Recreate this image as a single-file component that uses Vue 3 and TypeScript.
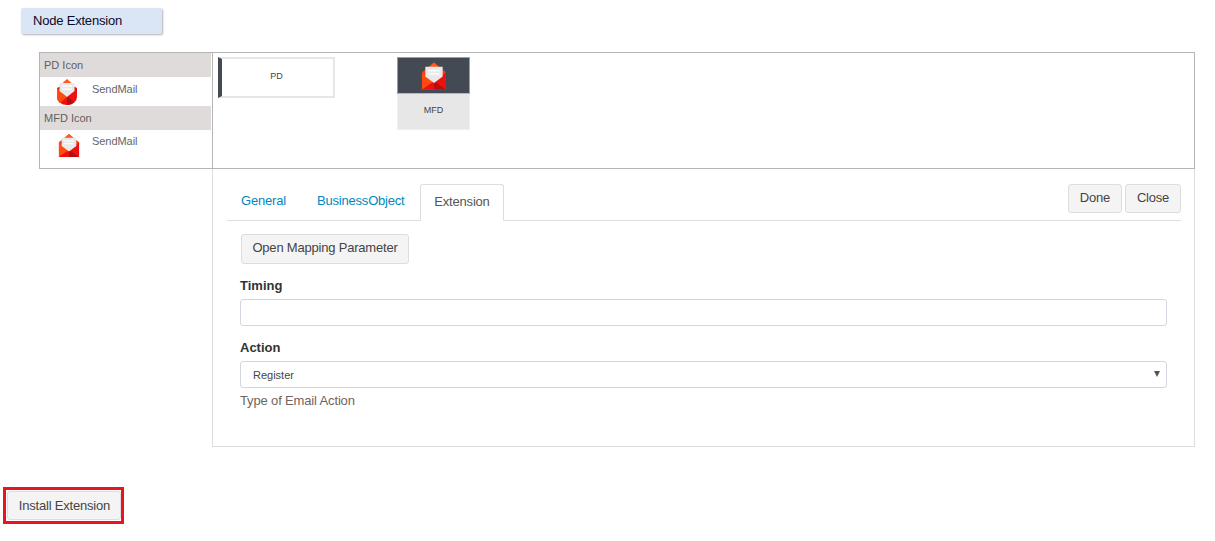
<script setup lang="ts">
const envelopeParts = [
  { d: 'M12 0 L23 9 V25 H1 V9 Z', fill: '#f2410f' },
  { d: 'M12 0 L16.5 4 H7.5 Z', fill: '#ff5a1f' },
  { d: 'M1 9 L12 18 L1 25 Z', fill: '#ff4a10' },
  { d: 'M23 9 L12 18 L23 25 Z', fill: '#ee0f0f' },
  { d: 'M1 25 L12 17 L12 25 Z', fill: '#ee1010' },
  { d: 'M23 25 L12 17 L12 25 Z', fill: '#b80d0d' },
  { d: 'M4 4 H20 V13 L12 19 L4 13 Z', fill: '#e9e9e9' },
  { d: 'M7 7 H17 V8.2 H7 Z M7 10 H17 V11.2 H7 Z', fill: '#ffffff' },
]
const roundParts = [
  { d: 'M11 0 L15.5 4 H6.5 Z', fill: '#ff5a1f' },
  { d: 'M1 9 L11 4 L21 9 V18 A10 8 0 0 1 1 18 Z', fill: '#ee1010' },
  { d: 'M1 9 L11 18 L4 24 A10 8 0 0 1 1 18 Z', fill: '#ff4a10' },
  { d: 'M11 17 L18 23.5 A10 6 0 0 1 11 26 Z', fill: '#b80d0d' },
  { d: 'M3.5 4 H18.5 V12 L11 18 L3.5 12 Z', fill: '#e9e9e9' },
  { d: 'M6 6.5 H16 V7.7 H6 Z M6 9.5 H16 V10.7 H6 Z', fill: '#ffffff' },
]
</script>

<template>
  <div class="page">
    <div class="chip">Node Extension</div>

    <div class="designer">
      <aside class="palette">
        <div class="pal-head">PD Icon</div>
        <div class="pal-row pal-row-pd">
          <svg class="pal-icon round" width="22" height="26" viewBox="0 0 22 26">
            <path v-for="p in roundParts" :key="p.d" :d="p.d" :fill="p.fill" />
          </svg>
          <span class="pal-name">SendMail</span>
        </div>
        <div class="pal-head">MFD Icon</div>
        <div class="pal-row pal-row-mfd">
          <svg class="pal-icon square" width="22" height="25" viewBox="0 0 24 25">
            <path v-for="p in envelopeParts" :key="p.d" :d="p.d" :fill="p.fill" />
          </svg>
          <span class="pal-name">SendMail</span>
        </div>
      </aside>

      <div class="canvas">
        <div class="node-pd">PD</div>
        <div class="node-mfd">
          <div class="node-mfd-top">
            <svg width="26" height="28" viewBox="0 0 24 25">
              <path v-for="p in envelopeParts" :key="p.d" :d="p.d" :fill="p.fill" />
            </svg>
          </div>
          <div class="node-mfd-label">MFD</div>
        </div>
      </div>
    </div>

    <section class="props">
      <div class="tabbar">
        <div class="tabs">
          <a class="tab tab-general">General</a>
          <a class="tab tab-bo">BusinessObject</a>
          <a class="tab tab-active">Extension</a>
        </div>
        <div class="tab-actions">
          <button class="btn btn-done" type="button">Done</button>
          <button class="btn btn-close" type="button">Close</button>
        </div>
      </div>

      <div class="form">
        <button class="btn btn-map" type="button">Open Mapping Parameter</button>
        <label class="label label-timing">Timing</label>
        <input class="control" type="text" />
        <label class="label label-action">Action</label>
        <div class="select-wrap">
          <span>Register</span>
          <i class="caret"></i>
        </div>
        <p class="help">Type of Email Action</p>
      </div>
    </section>

    <div class="install-mark">
      <button class="btn btn-install" type="button">Install Extension</button>
    </div>
  </div>
</template>

<style>
html, body { margin: 0; background: #fff; }
</style>

<style scoped>
.page {
  width: 1215px;
  height: 541px;
  overflow: hidden;
  box-sizing: border-box;
  padding-top: 8px;
  font-family: "Liberation Sans", Arial, sans-serif;
  color: #333;
}
.chip {
  box-sizing: border-box;
  width: 141px;
  height: 26px;
  margin-left: 21px;
  padding-left: 12px;
  line-height: 25px;
  font-size: 13px;
  letter-spacing: -0.2px;
  color: #0a0a2a;
  background: #dae5f5;
  border-radius: 2px;
  box-shadow: 1px 1px 2px rgba(0, 0, 0, 0.3);
}
.designer {
  display: flex;
  margin: 18px 20px 0 39px;
  height: 117px;
  box-sizing: border-box;
  border: 1px solid #b5b5b5;
}
.palette {
  width: 173px;
  flex: none;
  box-sizing: border-box;
  padding-right: 1px;
  border-right: 1px solid #b5b5b5;
  font-size: 11px;
  color: #666;
}
.pal-head {
  height: 24px;
  line-height: 25px;
  padding-left: 4px;
  background: #e0dbdb;
  color: #5f5f5f;
}
.pal-row { display: flex; position: relative; }
.pal-row-pd { height: 29px; }
.pal-row-mfd { height: 36px; }
.pal-icon { flex: none; margin-top: 2px; }
.round { margin-left: 16px; }
.square { margin-left: 18px; margin-top: 3px; }
.pal-name { margin-top: 6px; letter-spacing: -0.05px; }
.square + .pal-name { margin-top: 5px; }
.round + .pal-name { margin-left: 14px; }
.square + .pal-name { margin-left: 12px; }
.canvas { position: relative; flex: 1; }
.node-pd {
  position: absolute;
  left: 5px;
  top: 4px;
  box-sizing: border-box;
  width: 117px;
  height: 41px;
  padding-right: 2px;
  border: 2px solid #e6e6e6;
  border-left: 4px solid #434a54;
  text-align: center;
  line-height: 35px;
  font-size: 9px;
  color: #444;
}
.node-mfd {
  position: absolute;
  left: 184px;
  top: 4px;
  width: 73px;
  height: 73px;
  font-size: 9px;
  color: #444;
}
.node-mfd-top {
  box-sizing: border-box;
  height: 37px;
  background: #434a54;
  border: 1px solid #9a9ea6;
  border-bottom-color: #b5b8bd;
  display: flex;
  justify-content: center;
  align-items: center;
}
.node-mfd-label {
  box-sizing: border-box;
  height: 36px;
  line-height: 32px;
  text-align: center;
  background: #e7e7e7;
  border: 1px solid #efefef;
  border-top: 0;
}
.props {
  box-sizing: border-box;
  margin: 0 20px 0 212px;
  width: 983px;
  height: 278px;
  border: 1px solid #ddd;
  border-top: 0;
  padding: 15px 13px 0 14px;
}
.tabbar {
  display: flex;
  justify-content: space-between;
  align-items: flex-start;
  height: 37px;
  box-sizing: border-box;
  border-bottom: 1px solid #ddd;
}
.tabs { display: flex; font-size: 13px; letter-spacing: -0.2px; }
.tab {
  box-sizing: border-box;
  height: 37px;
  line-height: 33px;
  color: #0088c0;
}
.tab-general { margin-left: 14px; width: 76px; }
.tab-bo { width: 103px; }
.tab-active {
  width: 84px;
  text-align: center;
  color: #555;
  background: #fff;
  border: 1px solid #ddd;
  border-bottom-color: #fff;
  border-radius: 3px 3px 0 0;
}
.tab-actions { display: flex; gap: 3px; }
.btn {
  box-sizing: border-box;
  font-family: inherit;
  font-size: 13px;
  letter-spacing: -0.2px;
  color: #444;
  background: #f4f4f4;
  border: 1px solid #ddd;
  border-radius: 3px;
  padding: 0 0 3px;
}
.btn-done { width: 54px; height: 29px; }
.btn-close { width: 56px; height: 29px; }
.form { padding: 13px 14px 0 13px; }
.btn-map { display: block; width: 168px; height: 30px; margin-left: 1px; }
.label {
  display: block;
  font-size: 13px;
  font-weight: bold;
  color: #333;
  line-height: 16px;
}
.label-timing { margin-top: 14px; }
.label-action { margin-top: 14px; }
.control, .select-wrap {
  display: block;
  box-sizing: border-box;
  width: 927px;
  height: 27px;
  margin-top: 5px;
  background: #fff;
  border: 1px solid #d2d6de;
  border-radius: 3px;
}
.select-wrap {
  position: relative;
  padding-left: 12px;
  font-size: 11px;
  line-height: 26px;
  color: #444;
}
.caret {
  position: absolute;
  right: 6px;
  top: 9px;
  width: 0;
  height: 0;
  border-left: 3px solid transparent;
  border-right: 3px solid transparent;
  border-top: 6px solid #555;
}
.help {
  margin: 5px 0 0;
  font-size: 13px;
  letter-spacing: -0.15px;
  line-height: 15px;
  color: #6f6460;
}
.install-mark {
  box-sizing: border-box;
  width: 121px;
  height: 37px;
  margin: 40px 0 0 3px;
  border: 3px solid #e8141f;
  padding: 1px 0 0 1px;
}
.btn-install { display: block; width: 114px; height: 29px; padding: 0 0 1px 1px; }
</style>
